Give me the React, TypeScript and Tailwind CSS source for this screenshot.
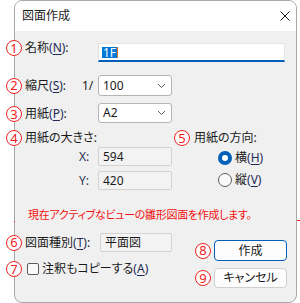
import React from "react";

function Num({ n, cls }: { n: string; cls: string }) {
  return (
    <span
      className={`absolute top-1/2 -translate-y-1/2 w-[16px] h-[16px] rounded-full border-[1.5px] border-[#f02020] bg-white text-[#f02020] text-[13px] leading-none flex items-center justify-center font-['Noto_Sans',sans-serif] ${cls}`}
    >
      {n}
    </span>
  );
}

function Acc({ k }: { k: string }) {
  return (
    <span className="text-[#1c2a55]">
      (<span className="underline underline-offset-[2px]">{k}</span>)
    </span>
  );
}

function Chevron() {
  return (
    <svg width="9" height="6" viewBox="0 0 9 6" className="mr-[5px]">
      <path d="M1 1 L4.5 4.5 L8 1" fill="none" stroke="#5a5a5a" strokeWidth="1" />
    </svg>
  );
}

export default function App() {
  return (
    <div className="relative w-[300px] h-[303px] bg-white overflow-hidden font-['Noto_Sans','Noto_Sans_CJK_JP',sans-serif] [font-feature-settings:'palt'] text-[12px] text-[#1a1a1a]">
      <div className="ml-[14px] w-[283px] h-[303px] border border-[#a8a8a8] rounded-[8px] bg-[#f0f0f0] flex flex-col">
        {/* title bar */}
        <div className="h-[30px] bg-white rounded-t-[7px] flex items-center justify-between pl-[7px] pr-[6px]">
          <span className="text-[12px] leading-none">図面作成</span>
          <svg width="10" height="10" viewBox="0 0 10 10">
            <path d="M0.5 0.5 L9.5 9.5 M9.5 0.5 L0.5 9.5" stroke="#1a1a1a" strokeWidth="1" />
          </svg>
        </div>

        <div className="pl-[10px] flex flex-col">
          {/* row 1 */}
          <div className="mt-[12px] flex h-[19px]">
            <div className="relative w-[73px] self-start -mt-px leading-[12px] h-[12px]">
              <Num n="1" cls="left-[-19px]" />
              名称<Acc k="N" />:
            </div>
            <div className="w-[187px] h-[19px] bg-white border border-[#e4e4e4] border-b-2 border-b-[#005fb8] flex items-center pl-[3px]">
              <span className="bg-[#0078d7] text-white leading-[11px] h-[11px] px-px flex items-center">1F</span>
              <span className="w-px h-[11px] bg-[#e07020]" />
            </div>
          </div>

          {/* row 2 */}
          <div className="mt-[13px] flex items-center h-[21px]">
            <div className="relative w-[57px] leading-[14px]">
              <Num n="2" cls="left-[-19px]" />
              縮尺<Acc k="S" />:
            </div>
            <div className="w-[16px] leading-[14px]">1/</div>
            <div className="w-[74px] h-full bg-white border border-[#b4b4b4] rounded-[3px] flex items-center justify-between pl-[4px]">
              <span>100</span>
              <Chevron />
            </div>
          </div>

          {/* row 3 */}
          <div className="mt-[7px] flex items-center h-[20px]">
            <div className="relative w-[73px] leading-[14px] translate-y-px">
              <Num n="3" cls="left-[-19px]" />
              用紙<Acc k="P" />:
            </div>
            <div className="w-[74px] h-full bg-white border border-[#b4b4b4] rounded-[3px] flex items-center justify-between pl-[4px]">
              <span>A2</span>
              <Chevron />
            </div>
          </div>

          {/* middle */}
          <div className="flex">
            <div className="w-[169px] flex flex-col">
              <div className="mt-[8px] h-[14px] leading-[14px] relative self-start">
                <Num n="4" cls="left-[-19px]" />
                用紙の大きさ:
              </div>
              <div className="mt-[2px] flex items-center h-[19px]">
                <div className="w-[54px]" />
                <div className="w-[19px] text-[#2a3450]">X:</div>
                <div className="w-[74px] h-full bg-[#f3f3f3] border border-[#d2d2d2] rounded-[2px] flex items-center pl-[4px]">
                  594
                </div>
              </div>
              <div className="mt-[5px] flex items-center h-[19px]">
                <div className="w-[54px]" />
                <div className="w-[19px] text-[#2a3450]">Y:</div>
                <div className="w-[74px] h-full bg-[#f3f3f3] border border-[#d2d2d2] rounded-[2px] flex items-center pl-[4px]">
                  420
                </div>
              </div>
            </div>
            <div className="flex flex-col">
              <div className="mt-[8px] h-[14px] leading-[14px] relative self-start">
                <Num n="5" cls="left-[-20px]" />
                用紙の方向:
              </div>
              <div className="mt-[5px] h-[16px] flex items-center pl-[24px] gap-[3px]">
                <span className="w-[14px] h-[14px] rounded-full bg-[#005fb8] flex items-center justify-center">
                  <span className="w-[6px] h-[6px] rounded-full bg-white" />
                </span>
                <span>
                  横<Acc k="H" />
                </span>
              </div>
              <div className="mt-[6px] h-[16px] flex items-center pl-[24px] gap-[3px]">
                <span className="w-[14px] h-[14px] rounded-full bg-[#fafafa] border border-[#5c5c5c]" />
                <span>
                  縦<Acc k="V" />
                </span>
              </div>
            </div>
          </div>

          {/* red message */}
          <div className="mt-[18px] h-[14px] leading-[14px] pl-[3px] text-[11px] tracking-[-0.3px] text-[#f01010]">
            現在アクティブなビューの雛形図面を作成します。
          </div>

          {/* bottom */}
          <div className="flex">
            <div className="w-[189px] flex flex-col">
              <div className="mt-[11px] flex items-center h-[19px]">
                <div className="relative w-[75px] leading-[14px]">
                  <Num n="6" cls="left-[-19px]" />
                  図面種別<Acc k="T" />:
                </div>
                <div className="w-[72px] h-full bg-[#f3f3f3] border border-[#d2d2d2] rounded-[2px] flex items-center pl-[4px]">
                  平面図
                </div>
              </div>
              <div className="mt-[10px] h-[14px] flex items-center relative">
                <Num n="7" cls="left-[-19px]" />
                <span className="ml-[2px] w-[12px] h-[12px] rounded-[2px] border border-[#5c5c5c] bg-[#fafafa]" />
                <span className="ml-[3px] leading-[14px]">
                  注釈もコピーする<Acc k="A" />
                </span>
              </div>
            </div>
            <div className="flex flex-col">
              <div className="relative mt-[18px] w-[73px] h-[21px] rounded-[4px] border border-[#005fb8] bg-[#fdfdfd] flex items-center justify-center">
                <Num n="8" cls="left-[-20px]" />
                作成
              </div>
              <div className="relative mt-[7px] w-[73px] h-[20px] rounded-[4px] border border-[#cfcfcf] bg-[#fdfdfd] flex items-center justify-center">
                <Num n="9" cls="left-[-20px]" />
                キャンセル
              </div>
            </div>
          </div>
        </div>
      </div>
      <span className="absolute left-[14px] top-[221px] w-px h-px bg-[#f02020]" />
      <span className="absolute left-[297px] top-[220px] w-[3px] h-px bg-[#f02020]" />
    </div>
  );
}
